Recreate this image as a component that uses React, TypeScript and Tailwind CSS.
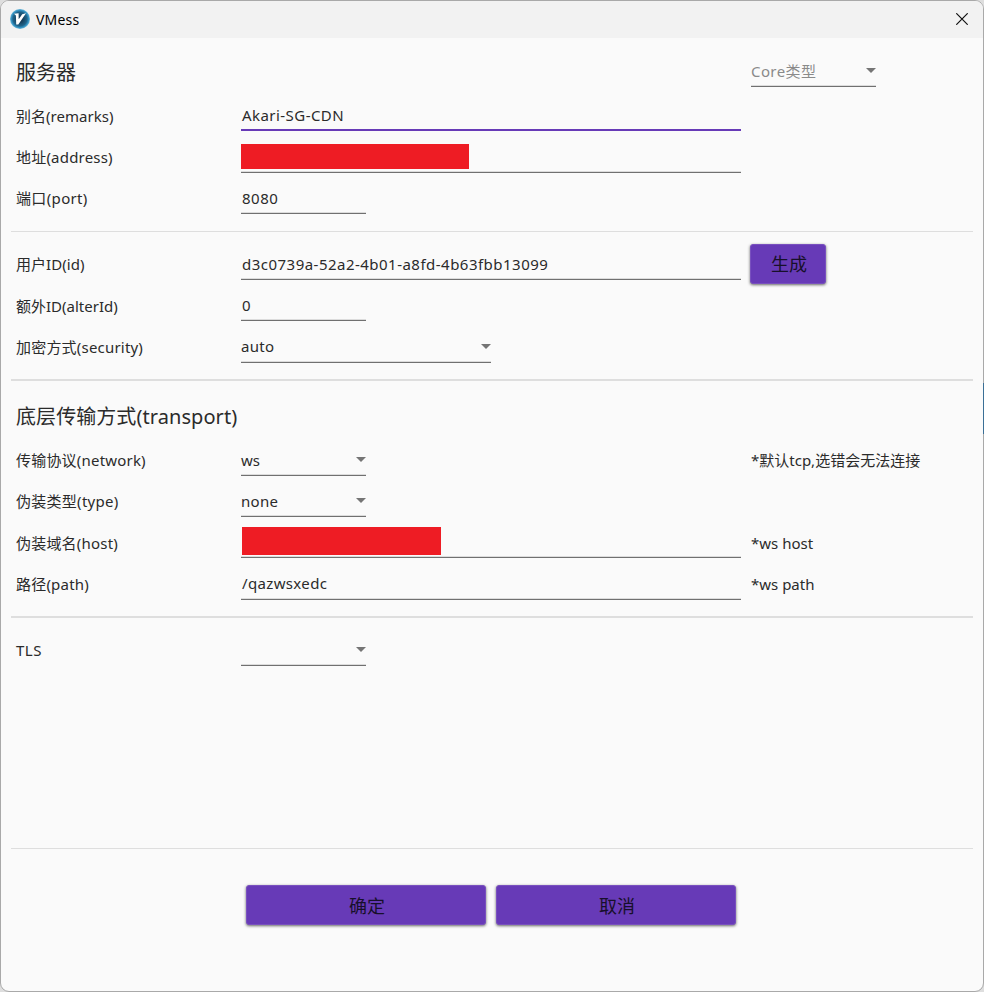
import type { ReactNode } from 'react';

const latin = "font-['Noto_Sans','Noto_Sans_CJK_SC',sans-serif]";

function Caret() {
  return (
    <svg width="10" height="5" viewBox="0 0 10 5" className="shrink-0">
      <path d="M0 0h10L5 5z" fill="#757575" />
    </svg>
  );
}

function Field({ width, children, active = false, select = false, muted = false, text = 'tracking-[0.4px]' }: { width: string; children?: ReactNode; active?: boolean; select?: boolean; muted?: boolean; text?: string }) {
  const line = active ? 'border-b-2 border-[#673ab7]' : 'border-b border-[#707070] shadow-[inset_0_-1px_0_#dcdcdc]';
  return (
    <div className={`flex h-[31px] items-center justify-between pb-px ${width} ${line} ${select ? '' : 'pl-px'} ${muted ? 'text-[#8a8a8a]' : ''}`}>
      <span className={text}>{children}</span>
      {select && <Caret />}
    </div>
  );
}

function Row({ label, height, hint, raised = false, tracking = 'tracking-[0.2px]', children }: { label: string; height: string; hint?: ReactNode; raised?: boolean; tracking?: string; children: ReactNode }) {
  const lift = raised ? 'mb-px' : '';
  return (
    <div className={`flex items-end pl-[5px] ${height}`}>
      <div className={`flex h-[31px] w-[225px] items-center ${tracking} ${lift}`}>{label}</div>
      <div className="w-[510px]">{children}</div>
      {typeof hint === 'string' ? (
        <div className={`flex h-[31px] items-center ${lift}`}>{hint}</div>
      ) : (
        <div className="flex h-[31px] items-center">{hint}</div>
      )}
    </div>
  );
}

function Redacted({ size }: { size: string }) {
  return (
    <div className="flex h-[31px] w-[500px] items-start border-b border-[#707070] shadow-[inset_0_-1px_0_#dcdcdc]">
      <div className={`bg-[#ee1c24] ${size}`} />
    </div>
  );
}

function Button({ children, size }: { children: string; size: string }) {
  return (
    <button className={`flex items-center justify-center rounded-[3px] border border-[#7950bf] bg-[#673ab7] text-[18px] text-[#17102a] shadow-[0_1px_3px_rgba(0,0,0,0.6)] ${size}`}>
      {children}
    </button>
  );
}

export default function App() {
  return (
    <div className="relative h-[992px] w-[984px] overflow-hidden bg-[#dedede]">
      <div className={`flex h-[992px] w-[984px] flex-col overflow-hidden rounded-[9px] border border-[#a9a9a9] bg-[#fafafa] text-[15px] leading-5 text-[#2b2b2b] ${latin}`}>
        <header className="flex h-[37px] shrink-0 items-center bg-[#f2f2f2] pl-[9px] pr-[15px] text-[14px] text-black">
          <svg width="20" height="20" viewBox="0 0 20 20" className="mb-px">
            <defs>
              <radialGradient id="ball">
                <stop offset="0.3" stopColor="#173f5c" />
                <stop offset="0.7" stopColor="#1f6389" />
                <stop offset="0.85" stopColor="#2f8dbd" />
                <stop offset="1" stopColor="#6bb8da" />
              </radialGradient>
            </defs>
            <circle cx="10" cy="10" r="10" fill="url(#ball)" />
            <path d="M4 4.800L8.600 4.200 8.700 10.300 12.200 5.200 16 4.300 8.300 15.500H6.200L5.900 6.400z" fill="#fff" />
          </svg>
          <span className="ml-[6px] tracking-[0.2px]">VMess</span>
          <svg className="mb-px ml-auto" width="12" height="12" viewBox="0 0 12 12">
            <path d="M.3.3l11.4 11.4M11.700.3L.3 11.700" stroke="#111" strokeWidth="1.2" />
          </svg>
        </header>

        <main className="flex flex-col px-[10px]">
          <div className="flex h-[49px] items-end pl-[5px]">
            <h1 className="flex h-[31px] w-[735px] items-center pt-[2px] text-[20px]">服务器</h1>
            <Field width="w-[125px]" select muted>Core类型</Field>
          </div>
          <Row label="别名(remarks)" height="h-[44px]" tracking="tracking-[0.03px]">
            <Field width="w-[500px]" active text="pt-px tracking-[0.45px]">Akari-SG-CDN</Field>
          </Row>
          <Row label="地址(address)" height="h-[42px]" raised>
            <Redacted size="mt-[2px] h-[25px] w-[228px]" />
          </Row>
          <Row label="端口(port)" height="h-[41px]" raised tracking="tracking-[0.35px]">
            <Field width="w-[125px]" text="tracking-[0.5px]">8080</Field>
          </Row>
          <hr className="mt-[17px] border-[#dedede]" />

          <Row
            label="用户ID(id)"
            height="h-[48px]"
            raised
            tracking="tracking-[0.05px]"
            hint={<div className="-ml-px h-[41px]"><Button size="h-[40px] w-[76px] pl-[2px]">生成</Button></div>}
          >
            <Field width="w-[500px]" text="tracking-[0.48px]">d3c0739a-52a2-4b01-a8fd-4b63fbb13099</Field>
          </Row>
          <Row label="额外ID(alterId)" height="h-[41px]" tracking="tracking-normal">
            <Field width="w-[125px]">0</Field>
          </Row>
          <Row label="加密方式(security)" height="h-[42px]" raised>
            <Field width="w-[250px]" select text="pb-[2px] tracking-[0.3px]">auto</Field>
          </Row>
          <hr className="mt-[16px] border-t-2 border-[#dedede]" />

          <h2 className="mt-[20px] h-[32px] pl-[5px] text-[20px] leading-8 tracking-[0.07px]">底层传输方式(transport)</h2>
          <Row label="传输协议(network)" height="h-[43px]" hint="*默认tcp,选错会无法连接" raised>
            <Field width="w-[125px]" select text="tracking-normal">ws</Field>
          </Row>
          <Row label="伪装类型(type)" height="h-[41px]" raised tracking="tracking-[0.28px]">
            <Field width="w-[125px]" select text="tracking-[0.3px]">none</Field>
          </Row>
          <Row label="伪装域名(host)" height="h-[41px]" hint="*ws host">
            <Redacted size="ml-px h-[28px] w-[199px]" />
          </Row>
          <Row label="路径(path)" height="h-[42px]" hint="*ws path" raised>
            <Field width="w-[500px]" text="pb-[2px] tracking-[0.35px]">/qazwsxedc</Field>
          </Row>
          <hr className="mt-[16px] border-t-2 border-[#dedede]" />

          <Row label="TLS" height="h-[48px]" raised tracking="tracking-[0.5px]">
            <Field width="w-[125px]" select />
          </Row>
          <hr className="mt-[182px] border-[#dedede]" />
          <div className="mt-[36px] flex gap-[10px] pl-[235px]">
            <Button size="h-[40px] w-[240px] pt-[2px] pl-[2px]">确定</Button>
            <Button size="h-[40px] w-[240px] pt-[2px] pl-[2px]">取消</Button>
          </div>
        </main>
      </div>
      <div className="absolute right-0 top-[383px] h-[51px] w-px bg-[#3a6f96]" />
    </div>
  );
}
